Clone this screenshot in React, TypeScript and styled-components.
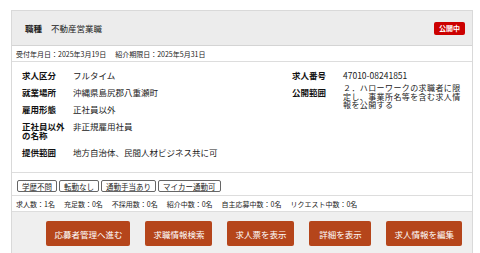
import React from "react";
import styled, { createGlobalStyle } from "styled-components";

const GlobalStyle = createGlobalStyle`
  body {
    margin: 0;
    background: #ffffff;
    font-family: "Noto Sans CJK JP", "Noto Sans", sans-serif;
    color: #222222;
  }
`;

const Page = styled.div`
  padding: 10px 0 0 11px;
`;

const Card = styled.div`
  width: 462px;
  box-sizing: border-box;
  border: 1px solid #d9d9d9;
  border-bottom: none;
`;

const Header = styled.div`
  display: flex;
  align-items: center;
  justify-content: space-between;
  height: 34px;
  padding: 0 7px 0 13px;
  background: #ececec;
  border-bottom: 1px solid #d4d4d4;
`;

const Title = styled.div`
  display: flex;
  align-items: center;
  gap: 9px;
  font-size: 8.5px;
  line-height: 9px;
`;

const TitleLabel = styled.span`
  font-weight: 700;
`;

const Badge = styled.span`
  display: flex;
  align-items: center;
  height: 13px;
  padding: 0 5px;
  border-radius: 2px;
  background: #cc0000;
  color: #ffffff;
  font-size: 7px;
  font-weight: 700;
`;

const SmallRow = styled.div`
  display: flex;
  align-items: center;
  gap: 9px;
  height: 15px;
  padding: 0 4px;
  font-size: 7px;
  border-bottom: 1px solid #dddddd;
`;

const Info = styled.div`
  display: grid;
  grid-template-columns: 270px 1fr;
  padding: 9px 7px 15px 10px;
  border-bottom: 1px solid #dddddd;
`;

const Column = styled.div`
  display: flex;
  flex-direction: column;
  gap: 8px;
`;

const Row = styled.div`
  display: flex;
  align-items: flex-start;
  font-size: 8.5px;
  line-height: 9px;
`;

const Label = styled.div`
  width: 51px;
  flex-shrink: 0;
  font-weight: 700;
  color: #111111;
  padding-right: 5px;
  box-sizing: border-box;
`;

const Value = styled.div<{ tight?: boolean }>`
  flex: 1;
  font-size: ${(p) => (p.tight ? "8px" : "8.5px")};
  letter-spacing: ${(p) => (p.tight ? "0.4px" : "0")};
  line-height: ${(p) => (p.tight ? "8.5px" : "9px")};
  margin-top: ${(p) => (p.tight ? "-4px" : "0")};
`;

const Tags = styled.div`
  display: flex;
  gap: 2px;
  height: 23px;
  padding: 7px 5px 0;
  box-sizing: border-box;
  border-bottom: 1px solid #dddddd;
`;

const Tag = styled.span`
  display: flex;
  align-items: center;
  height: 12px;
  padding: 0 4px;
  border: 1px solid #666666;
  border-radius: 2px;
  font-size: 7.5px;
  box-sizing: border-box;
`;

const Footer = styled.div`
  display: flex;
  justify-content: flex-end;
  gap: 15px;
  padding: 9px 10px 10px;
  background: #efefef;
`;

const ActionButton = styled.button`
  height: 25px;
  min-width: 62px;
  padding: 0 8px;
  border: none;
  border-radius: 2px;
  background: #b5451b;
  color: #ffffff;
  font-family: "Noto Sans CJK JP", sans-serif;
  font-size: 8.5px;
  cursor: pointer;
`;

const leftRows: [string, string][] = [
  ["求人区分", "フルタイム"],
  ["就業場所", "沖縄県島尻郡八重瀬町"],
  ["雇用形態", "正社員以外"],
  ["正社員以外の名称", "非正規雇用社員"],
  ["提供範囲", "地方自治体、民間人材ビジネス共に可"],
];

const tags = ["学歴不問", "転勤なし", "通勤手当あり", "マイカー通勤可"];

const counts = [
  "求人数：1名",
  "充足数：0名",
  "不採用数：0名",
  "紹介中数：0名",
  "自主応募中数：0名",
  "リクエスト中数：0名",
];

const actions = ["応募者管理へ進む", "求職情報検索", "求人票を表示", "詳細を表示", "求人情報を編集"];

export default function App() {
  return (
    <>
      <GlobalStyle />
      <Page>
        <Card>
          <Header>
            <Title>
              <TitleLabel>職種</TitleLabel>
              <span>不動産営業職</span>
            </Title>
            <Badge>公開中</Badge>
          </Header>

          <SmallRow>
            <span>受付年月日：2025年3月19日</span>
            <span>紹介期限日：2025年5月31日</span>
          </SmallRow>

          <Info>
            <Column>
              {leftRows.map(([label, value]) => (
                <Row key={label}>
                  <Label>{label}</Label>
                  <Value>{value}</Value>
                </Row>
              ))}
            </Column>
            <Column>
              <Row>
                <Label>求人番号</Label>
                <Value>47010-08241851</Value>
              </Row>
              <Row>
                <Label>公開範囲</Label>
                <Value tight>
                  ２．ハローワークの求職者に限定し、事業所名等を含む求人情報を公開する
                </Value>
              </Row>
            </Column>
          </Info>

          <Tags>
            {tags.map((t) => (
              <Tag key={t}>{t}</Tag>
            ))}
          </Tags>

          <SmallRow>
            {counts.map((c) => (
              <span key={c}>{c}</span>
            ))}
          </SmallRow>

          <Footer>
            {actions.map((a) => (
              <ActionButton key={a}>{a}</ActionButton>
            ))}
          </Footer>
        </Card>
      </Page>
    </>
  );
}
